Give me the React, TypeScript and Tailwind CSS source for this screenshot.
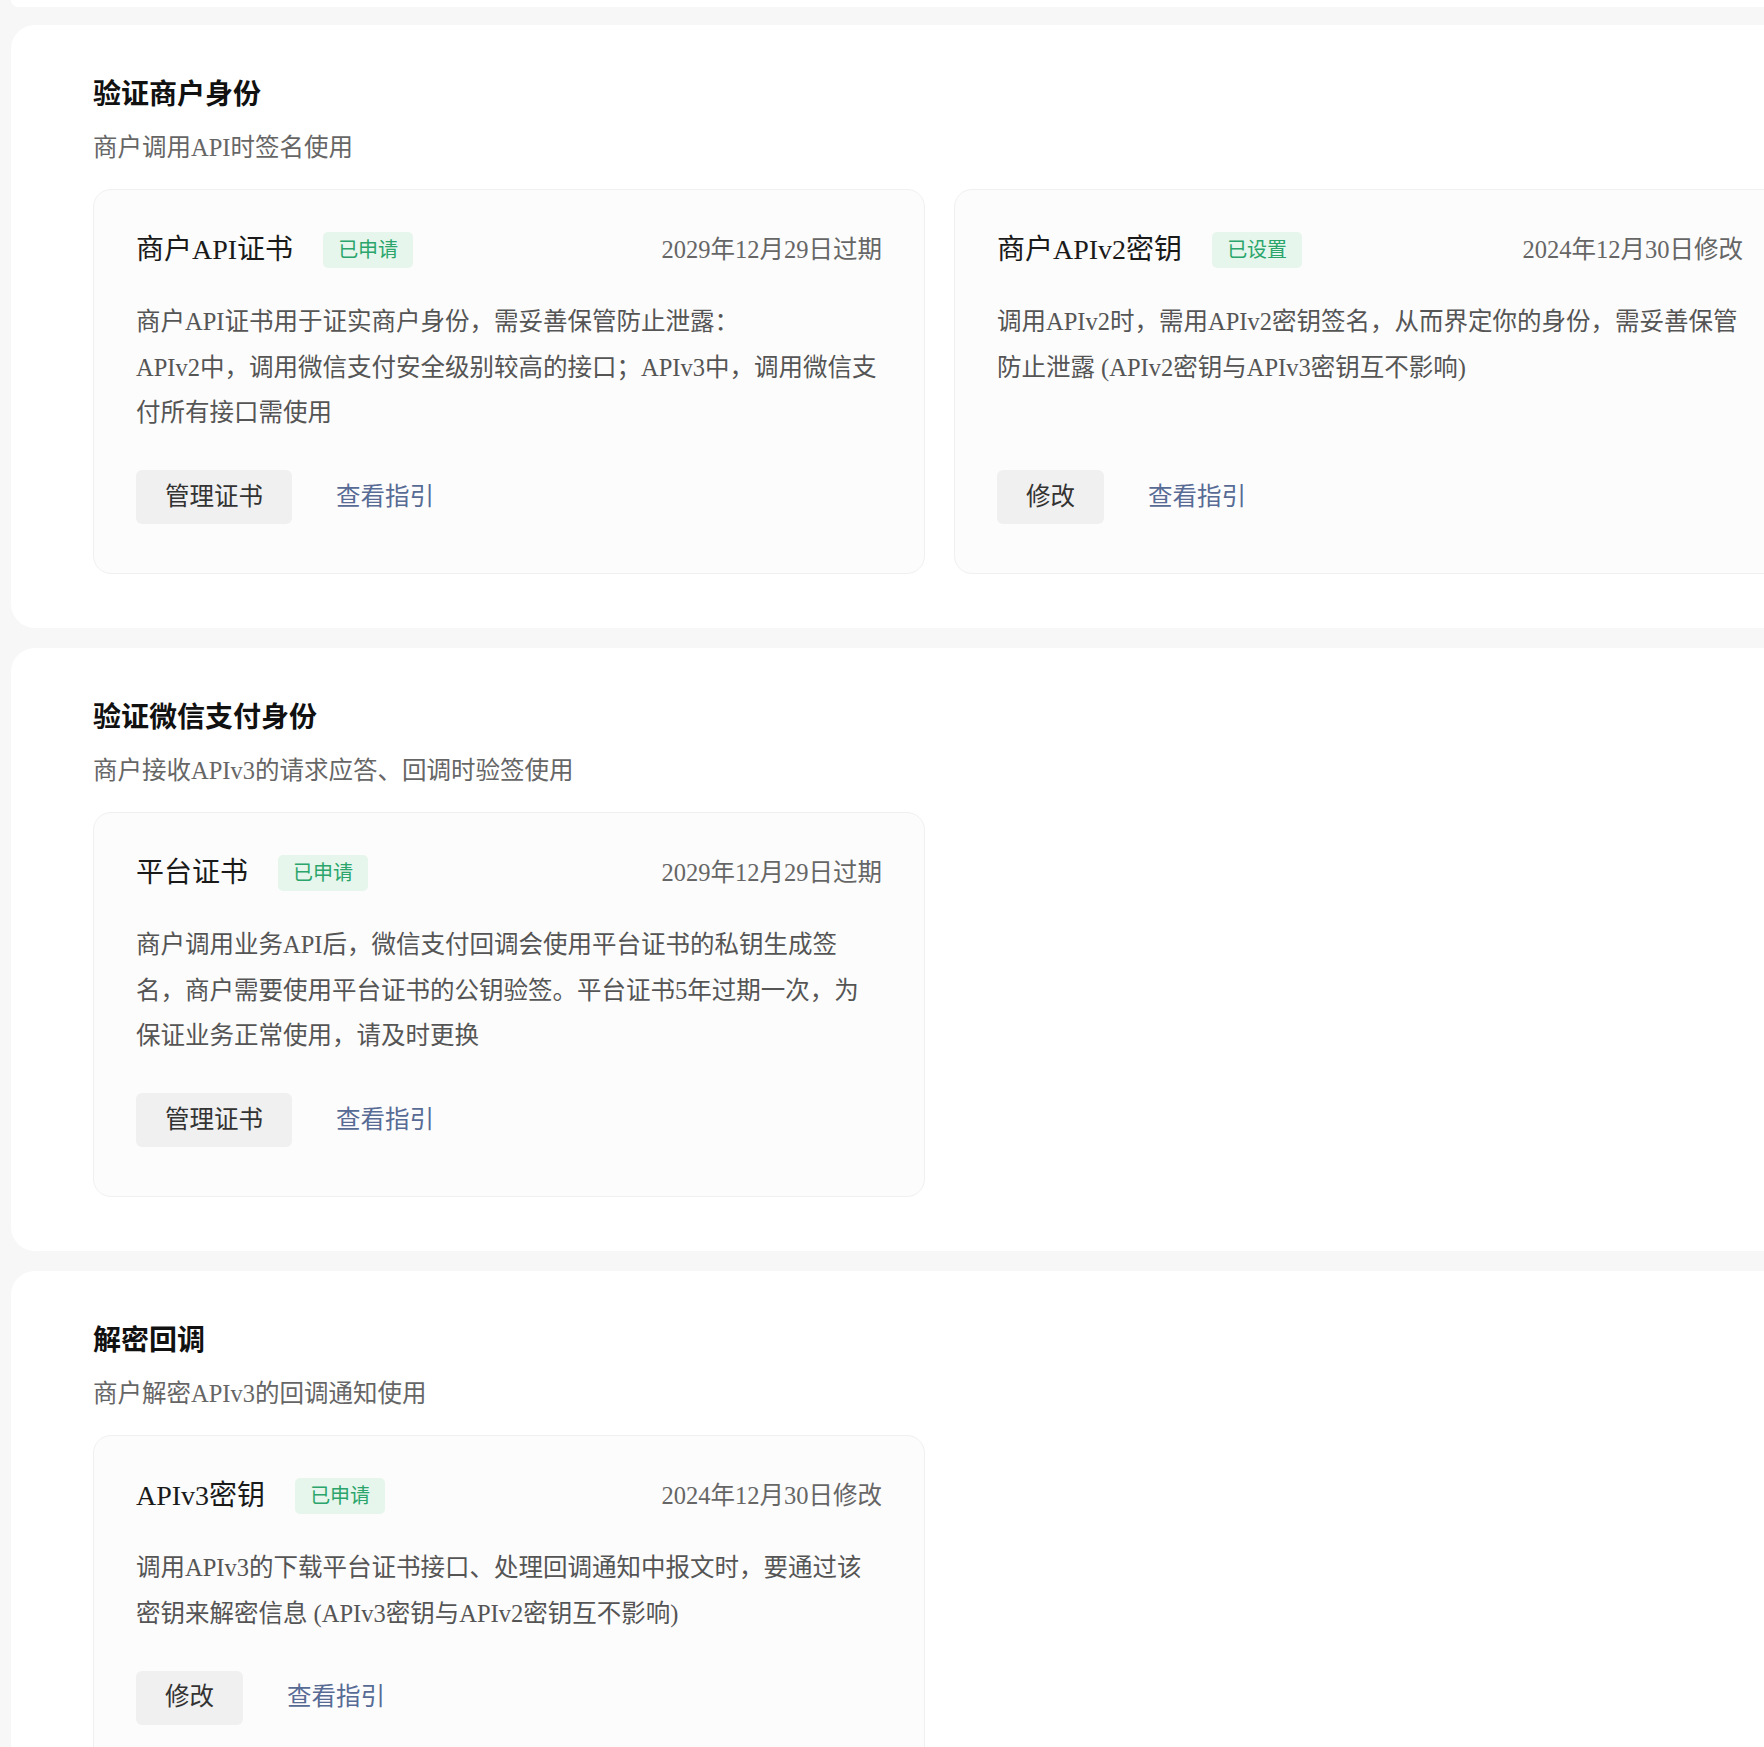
import React from "react";

type KeyCard = {
  title: string;
  badge: string;
  date: string;
  lines: string[];
  action: string;
};

type Section = {
  title: string;
  subtitle: string;
  cards: KeyCard[];
};

const sections: Section[] = [
  {
    title: "验证商户身份",
    subtitle: "商户调用API时签名使用",
    cards: [
      {
        title: "商户API证书",
        badge: "已申请",
        date: "2029年12月29日过期",
        lines: [
          "商户API证书用于证实商户身份，需妥善保管防止泄露：",
          "APIv2中，调用微信支付安全级别较高的接口；APIv3中，调用微信支付所有接口需使用",
        ],
        action: "管理证书",
      },
      {
        title: "商户APIv2密钥",
        badge: "已设置",
        date: "2024年12月30日修改",
        lines: ["调用APIv2时，需用APIv2密钥签名，从而界定你的身份，需妥善保管防止泄露 (APIv2密钥与APIv3密钥互不影响)"],
        action: "修改",
      },
    ],
  },
  {
    title: "验证微信支付身份",
    subtitle: "商户接收APIv3的请求应答、回调时验签使用",
    cards: [
      {
        title: "平台证书",
        badge: "已申请",
        date: "2029年12月29日过期",
        lines: [
          "商户调用业务API后，微信支付回调会使用平台证书的私钥生成签名，商户需要使用平台证书的公钥验签。平台证书5年过期一次，为保证业务正常使用，请及时更换",
        ],
        action: "管理证书",
      },
    ],
  },
  {
    title: "解密回调",
    subtitle: "商户解密APIv3的回调通知使用",
    cards: [
      {
        title: "APIv3密钥",
        badge: "已申请",
        date: "2024年12月30日修改",
        lines: ["调用APIv3的下载平台证书接口、处理回调通知中报文时，要通过该密钥来解密信息 (APIv3密钥与APIv2密钥互不影响)"],
        action: "修改",
      },
    ],
  },
];

function KeyCardView({ card }: { card: KeyCard }) {
  return (
    <div className="flex flex-col rounded-[18px] border border-[#f0f0f0] bg-[#fcfcfc] px-[42px] pt-[42px] pb-[49px]">
      <div className="flex h-[36px] items-center">
        <span className="text-[28px] leading-[36px] text-[#1a1a1a]">{card.title}</span>
        <span className="ml-[30px] h-[36px] rounded-[5px] bg-[#e6f6ec] px-[15px] text-[20px] leading-[36px] text-[#2ba56b]">
          {card.badge}
        </span>
        <span className="ml-auto text-[24.5px] leading-[36px] text-[#666]">{card.date}</span>
      </div>
      <div className="mt-[31px] flex-1 text-[24.5px] leading-[45.5px] text-[#555]">
        {card.lines.map((line) => (
          <p key={line}>{line}</p>
        ))}
      </div>
      <div className="mt-[34.5px] flex items-center">
        <button
          type="button"
          className="h-[54px] rounded-[6px] bg-[#f0f0f0] px-[29px] text-[24.5px] text-[#333]"
        >
          {card.action}
        </button>
        <a className="ml-[44px] text-[24.5px] text-[#576b95]">查看指引</a>
      </div>
    </div>
  );
}

export default function App() {
  return (
    <div className="min-h-screen overflow-hidden bg-[#f7f7f7] [font-family:'Liberation_Serif','Noto_Sans_CJK_SC',serif]">
      <div className="ml-[11px] h-[7px] w-[1790px] rounded-b-[7px] bg-white" />
      <div className="flex flex-col gap-5 pt-[18px]">
        {sections.map((section) => (
          <section
            key={section.title}
            className="ml-[11px] w-[1790px] rounded-[24px] bg-white pt-[50px] pb-[54px] pl-[82px]"
          >
            <h2 className="text-[28px] leading-[40px] font-bold text-[#111]">{section.title}</h2>
            <p className="mt-[17px] text-[24.5px] leading-[32px] text-[#666]">{section.subtitle}</p>
            <div className="mt-[25px] grid grid-cols-[832px_832px] gap-[29px]">
              {section.cards.map((card) => (
                <KeyCardView key={card.title} card={card} />
              ))}
            </div>
          </section>
        ))}
      </div>
    </div>
  );
}
